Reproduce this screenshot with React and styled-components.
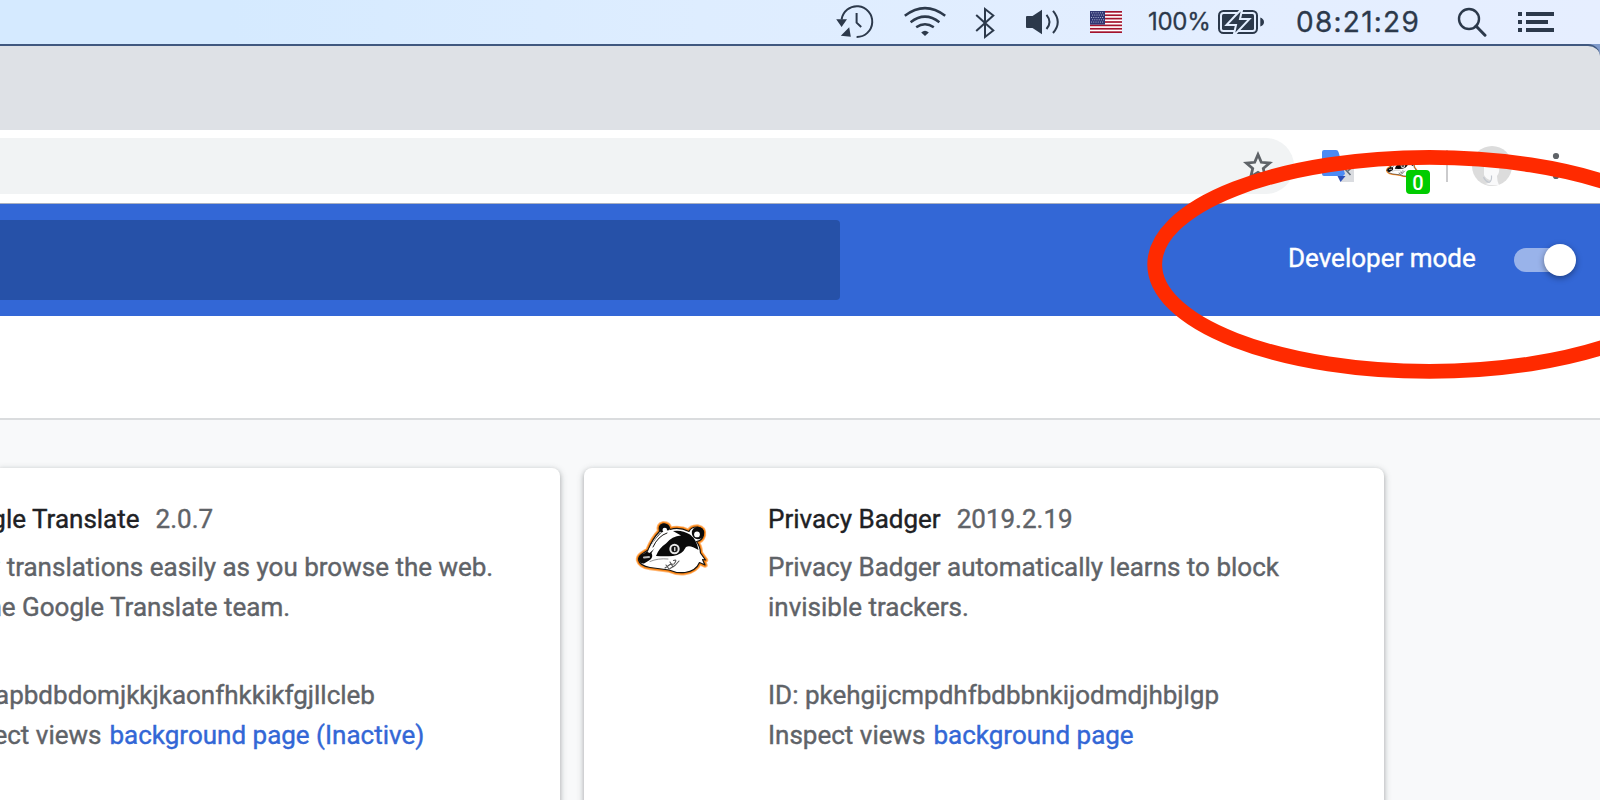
import React from "react";
import styled, { createGlobalStyle } from "styled-components";

const INK = "#2c394b";

const GlobalStyle = createGlobalStyle`
  html, body { margin: 0; padding: 0; overflow: hidden; }
  body { font-family: Roboto, sans-serif; background: #fff; }
`;

const Screen = styled.div`
  position: relative;
  width: 1600px;
  height: 800px;
  overflow: hidden;
  display: flex;
  flex-direction: column;
  background: #fff;
`;

const MenuBar = styled.div`
  flex: none;
  height: 44px;
  display: flex;
  align-items: flex-start;
  justify-content: flex-end;
  box-sizing: border-box;
  padding-right: 46px;
  color: ${INK};
  background: linear-gradient(90deg, #d5eaff 0, #d5eaff 230px, #deedff 700px, #e4eeff 1300px, #e6eeff 100%);
  font-family: Inter, sans-serif;
`;

const MenuIcon = styled.svg`
  flex: none;
  display: block;
  width: ${(p) => p.$w}px;
  height: 44px;
  margin-right: ${(p) => p.$gap || 0}px;
`;

const MenuText = styled.span`
  flex: none;
  width: ${(p) => p.$w}px;
  margin-right: ${(p) => p.$gap}px;
  font-size: ${(p) => p.$size}px;
  line-height: 44px;
  letter-spacing: ${(p) => p.$track}px;
  -webkit-text-stroke: 0.3px currentColor;
  white-space: nowrap;
`;

const WindowEdge = styled.div`
  flex: none;
  background: #7f9acb;
`;

const TabStrip = styled.div`
  height: 84px;
  border-top: 2px solid #40587f;
  border-top-right-radius: 12px;
  background: #dee1e6;
`;

const Toolbar = styled.div`
  flex: none;
  height: 73px;
  display: flex;
  align-items: flex-start;
  background: #fff;
  border-bottom: 1px solid #a9b0c0;
`;

const Omnibox = styled.div`
  width: 1294px;
  height: 56px;
  margin-top: 8px;
  border-radius: 0 28px 28px 0;
  background: #f1f3f4;
  display: flex;
  justify-content: flex-end;
  align-items: center;
`;

const ToolIcon = styled.svg`
  flex: none;
  display: block;
  width: ${(p) => p.$w}px;
  height: ${(p) => p.$h || 56}px;
  margin-left: ${(p) => p.$left || 0}px;
  margin-top: ${(p) => p.$top || 0}px;
`;

const ExtensionButton = styled.div`
  position: relative;
  display: flex;
  align-items: flex-start;
  width: 46px;
  height: 56px;
  margin: 8px 0 0 30px;
`;

const CountBadge = styled.span`
  position: absolute;
  right: 0;
  bottom: 0;
  width: 24px;
  height: 24px;
  border-radius: 4px;
  background: #00cc00;
  color: #fff;
  font: 500 20px/27px Roboto, sans-serif;
  text-align: center;
`;

const Divider = styled.div`
  width: 2px;
  height: 32px;
  margin: 20px 0 0 16px;
  background: #cbcbcd;
`;

const Header = styled.div`
  flex: none;
  height: 112px;
  display: flex;
  align-items: center;
  justify-content: space-between;
  box-sizing: border-box;
  padding-right: 24px;
  background: #3367d6;
`;

const SearchField = styled.div`
  width: 840px;
  height: 80px;
  border-radius: 0 4px 4px 0;
  background: #2651a8;
`;

const DevMode = styled.div`
  display: flex;
  align-items: center;
  color: #fff;
  font-size: 26px;
  line-height: 40px;
`;

const DevLabel = styled.span`
  width: 226px;
  white-space: nowrap;
  padding-bottom: 4px;
  -webkit-text-stroke: 0.4px currentColor;
`;

const Track = styled.span`
  width: 62px;
  height: 24px;
  box-sizing: border-box;
  display: flex;
  align-items: center;
  justify-content: flex-end;
  background: linear-gradient(#99b3ea, #99b3ea) 0 0 / 50px 24px no-repeat;
  border-radius: 12px;
`;

const Knob = styled.span`
  flex: none;
  width: 32px;
  height: 32px;
  border-radius: 50%;
  background: #fff;
  box-shadow: 0 2px 6px rgba(0, 0, 0, 0.4);
`;

const ActionArea = styled.div`
  flex: none;
  height: 102px;
  border-bottom: 2px solid #dadcde;
  background: #fff;
`;

const CardArea = styled.div`
  flex: 1;
  min-height: 0;
  display: flex;
  gap: 24px;
  padding-top: 48px;
  background: #f8f9fa;
`;

const Card = styled.div`
  flex: none;
  width: ${(p) => (p.$cut ? 560 : 800)}px;
  height: 420px;
  box-sizing: border-box;
  border-radius: ${(p) => (p.$cut ? "0 8px 8px 0" : "8px")};
  background: #fff;
  box-shadow: 0 2px 4px rgba(60, 64, 67, 0.3), 0 2px 6px 2px rgba(60, 64, 67, 0.15);
  display: flex;
  justify-content: ${(p) => (p.$cut ? "flex-end" : "flex-start")};
  padding: 31px ${(p) => (p.$cut ? 0 : 40)}px 0 ${(p) => (p.$cut ? 0 : 48)}px;
  overflow: hidden;
`;

const CardIcon = styled.svg`
  flex: none;
  width: 80px;
  height: 80px;
  margin: 9px 56px 0 0;
`;

const CardText = styled.div`
  width: ${(p) => (p.$cut ? 616 : 560)}px;
  flex: none;
  font-size: 26px;
  line-height: 40px;
  color: #5f6368;
  white-space: nowrap;
  -webkit-text-stroke: 0.4px currentColor;
`;

const Title = styled.div`
  color: #202124;
  height: 40px;
  margin-bottom: 8px;
`;

const Version = styled.span`
  color: #5f6368;
  margin-left: 16px;
`;

const Line = styled.div`
  height: 40px;
  margin-top: ${(p) => p.$top || 0}px;
`;

const Link = styled.a`
  color: #3367d6;
  margin-left: 8px;
`;

const Highlight = styled.svg`
  position: absolute;
  left: 1140px;
  top: 140px;
  width: 460px;
  height: 250px;
`;

const HEAD =
  "M2.5 38 Q2 35 6 32 L12 28 Q17 16 23.5 9.5 Q22 3 27 1.8 Q33 1.5 34 7.5 Q43 4.5 53 9.5 Q55 4.8 61.5 5 Q68.5 6.5 67.5 13 Q66 19 60.5 19.5 Q64 24 64.5 31 L69.5 38 L66.5 37.5 L69 43 L63.5 40.5 Q60 49 49 50.5 Q41 51.5 33 48 L14 45.5 Q4 44 2.5 38Z";

const BadgerArt = () => (
  <g strokeLinejoin="round" strokeLinecap="round">
    <path d={HEAD} fill="#fff" stroke="#ffb877" strokeWidth="5.4" />
    <path d={HEAD} fill="#fff" stroke="#f98413" strokeWidth="3.6" />
    <path d={HEAD} fill="#fff" stroke="#171411" strokeWidth="1.2" />
    <path d="M3 38 Q2 33 8 31.5 L14 27 Q18 17 24 11 Q27 12 29 11 Q23 16 20.5 23 L15.5 31 Q18 36 13 38.5 L8 41.5 Q4 42 3 38Z" fill="#0a0a0a" />
    <circle cx="28.3" cy="6.6" r="5.2" fill="#0a0a0a" />
    <circle cx="28.8" cy="8" r="2.3" fill="#fff" />
    <path d="M24 12 Q29 7.5 35 8.5 L24 22 L13.5 31 L11.5 30 Q17 19 24 12Z" fill="#fff" />
    <path d="M17 25 Q22 14 31 11" fill="none" stroke="#171411" strokeWidth="1" />
    <path d="M20 34 Q23 26 30 21.5 Q36 14 45 13.5 L37 9 Q46 7.5 54 12.5 Q61 18 62.5 28 Q54 22.5 50 25 Q46 33 37 34 Q29 34.5 20 34Z" fill="#0a0a0a" />
    <circle cx="62" cy="11" r="6.2" fill="#0a0a0a" />
    <circle cx="61" cy="12.4" r="2.9" fill="#fff" />
    <path d="M8 35.5 L13 35" stroke="#bbb" strokeWidth="2" />
    <circle cx="38.5" cy="27" r="5.2" fill="#e8e8e8" />
    <circle cx="38.5" cy="27" r="3.2" fill="#111" />
    <path d="M38.8 25.6 V28.6" stroke="#fff" strokeWidth="1.2" />
    <path d="M29 46 L34 42.5 L38 42 Q42 37 37.5 38.5 M34 46.5 L39 43.5 L43 39 M30 43 L33 47 M34 40 L37 45" fill="none" stroke="#555" strokeWidth="1.1" />
    <path d="M14 39.5 Q22 36 32 37" fill="none" stroke="#777" strokeWidth="0.8" />
  </g>
);

const FlagStars = () => {
  const stars = [];
  for (let r = 0; r < 5; r++)
    for (let c = 0; c < 6; c++)
      stars.push(<circle key={`${r}-${c}`} cx={1.6 + c * 2.2 + (r % 2 ? 1 : 0)} cy={12.8 + r * 2.3} r="0.5" />);
  return <g fill="#d5daf0">{stars}</g>;
};

export default function App() {
  return (
    <>
      <GlobalStyle />
      <Screen>
        <MenuBar>
          <MenuIcon $w={40} $gap={28} viewBox="0 0 40 44" fill="none" stroke={INK} strokeWidth="2">
            <path d="M5.6 19.5 A15.4 15.4 0 1 1 20.6 37" />
            <path d="M20.6 13 V22.6 L25.2 27" />
            <path d="M.2 19.3 H11 L5.6 27Z M13.2 27.3 L4.8 35.7 L14.8 36.7Z" fill={INK} stroke="none" />
          </MenuIcon>
          <MenuIcon $w={42} $gap={29} viewBox="0 0 42 44" fill="none" stroke={INK} strokeWidth="2.5">
            <path d="M.8 15.8 Q21 .5 41.2 15.8 M6.6 22.2 Q21 11 35.4 22.2 M12.2 27.3 Q21 21.2 29.8 27.3" />
            <path d="M17.2 32.4 Q21 29.3 24.8 32.4 L21 36Z" fill={INK} stroke="none" />
          </MenuIcon>
          <MenuIcon $w={20} $gap={30} viewBox="0 0 20 44" fill="none" stroke={INK} strokeWidth="2">
            <path d="M1.2 15 L18.3 30.5 L10 37 V9 L18.3 15.5 L1.2 31" />
          </MenuIcon>
          <MenuIcon $w={36} $gap={29} viewBox="0 0 36 44" fill="none" stroke={INK} strokeWidth="2">
            <path d="M1 17 Q1 16 2 16 H7.5 L17 9.8 V34.2 L7.5 28 H2 Q1 28 1 27Z" fill={INK} stroke="none" />
            <path d="M21.5 14.8 Q27.5 22 21.5 29 M28 10.8 Q37.5 22 28 33" />
          </MenuIcon>
          <MenuIcon $w={32} $gap={26} viewBox="0 0 32 44">
            <rect y="11" width="32" height="22" fill="#fff" />
            {[0, 1, 2, 3, 4, 5, 6].map((i) => (
              <rect key={i} y={11 + i * 3.385} width="32" height="1.69" fill="#a3132d" />
            ))}
            <rect y="11" width="15" height="13.6" fill="#2f3672" />
            <FlagStars />
          </MenuIcon>
          <MenuText $w={62} $gap={8} $size={24} $track={-0.3}>100%</MenuText>
          <MenuIcon $w={46} $gap={32} viewBox="0 0 46 44">
            <rect x="1" y="11" width="38" height="22" rx="4.5" fill="none" stroke={INK} strokeWidth="2" />
            <rect x="4" y="14" width="32" height="16" rx="1.5" fill={INK} />
            <path d="M42.3 17.5 Q46 19 46 22 Q46 25 42.3 26.5Z" fill={INK} />
            <path d="M24.5 8 L8.5 25 H18 L15.5 36 L31.5 19 H22Z" fill={INK} stroke="#e3eeff" strokeWidth="2" />
          </MenuIcon>
          <MenuText $w={126} $gap={35} $size={28} $track={1.25}>08:21:29</MenuText>
          <MenuIcon $w={30} $gap={31} viewBox="0 0 30 44" fill="none" stroke={INK} strokeWidth="2.4">
            <circle cx="12" cy="19" r="10" />
            <path d="M19 26 L28 35.2" strokeWidth="3" strokeLinecap="round" />
          </MenuIcon>
          <MenuIcon $w={36} viewBox="0 0 36 44" fill={INK}>
            <path d="M0 12h4v4H0z M0 20h4v4H0z M0 28h4v4H0z M8 12h28v4H8z M8 20h22v4H8z M8 28h28v4H8z" />
          </MenuIcon>
        </MenuBar>
        <WindowEdge><TabStrip /></WindowEdge>
        <Toolbar>
          <Omnibox>
            <ToolIcon $w={52} viewBox="0 0 52 56">
              <path d="M16 16.5 L19.3 24.3 L27.6 25 L21.3 30.5 L23.2 38.6 L16 34.3 L8.8 38.6 L10.7 30.5 L4.4 25 L12.7 24.3Z" fill="none" stroke="#5f6368" strokeWidth="2.8" />
            </ToolIcon>
          </Omnibox>
          <ToolIcon $w={32} $h={32} $left={28} $top={20} viewBox="0 0 32 32">
            <path d="M12 8 H30 Q32 8 32 10 V32 H19Z" fill="#dadce0" />
            <path d="M22 18 L28.5 25 M29 18 L26 21" stroke="#5f6b78" strokeWidth="1.6" />
            <path d="M2 0 H14 Q16 0 16.5 2 L23 24 L21 26 H2 Q0 26 0 24 V2 Q0 0 2 0Z" fill="#4c8bf5" />
            <path d="M15.5 26 H23.5 L18.5 32Z" fill="#2c50b8" />
          </ToolIcon>
          <ExtensionButton>
            <ToolIcon $w={32} $h={25} $left={2} $top={15} viewBox="0 -2 73 57"><BadgerArt /></ToolIcon>
            <CountBadge>0</CountBadge>
          </ExtensionButton>
          <Divider />
          <ToolIcon $w={40} $h={40} $left={24} $top={16} viewBox="0 0 40 40">
            <circle cx="20" cy="20" r="20" fill="#dcdcdc" />
            <path d="M12 19 H27 Q28 27 25 30 Q25 35 27 39 Q20 40 13 38 Q18 37 18 34 Q14 33 12 29Z" fill="#f9f9fa" />
            <path d="M11.5 31 Q13 35 17 36.5 Q20 35 19.5 29.5" fill="none" stroke="#c3c8d0" strokeWidth="1.2" />
          </ToolIcon>
          <ToolIcon $w={8} $h={40} $left={40} $top={16} viewBox="0 0 8 40" fill="#5f6368">
            <circle cx="4" cy="10" r="3.1" /><circle cx="4" cy="20" r="3.1" /><circle cx="4" cy="30" r="3.1" />
          </ToolIcon>
        </Toolbar>
        <Header>
          <SearchField />
          <DevMode><DevLabel>Developer mode</DevLabel><Track><Knob /></Track></DevMode>
        </Header>
        <ActionArea />
        <CardArea>
          <Card $cut>
            <CardText $cut>
              <Title>Google Translate<Version>2.0.7</Version></Title>
              <Line>View translations easily as you browse the web.</Line>
              <Line>By the Google Translate team.</Line>
              <Line $top={48}>ID: aapbdbdomjkkjkaonfhkkikfgjllcleb</Line>
              <Line>Inspect views<Link>background page (Inactive)</Link></Line>
            </CardText>
          </Card>
          <Card>
            <CardIcon viewBox="0 0 80 80"><g transform="translate(4 14)"><BadgerArt /></g></CardIcon>
            <CardText>
              <Title>Privacy Badger<Version>2019.2.19</Version></Title>
              <Line>Privacy Badger automatically learns to block</Line>
              <Line>invisible trackers.</Line>
              <Line $top={48}>ID: pkehgijcmpdhfbdbbnkijodmdjhbjlgp</Line>
              <Line>Inspect views<Link>background page</Link></Line>
            </CardText>
          </Card>
        </CardArea>
        <Highlight viewBox="1140 140 460 250">
          <ellipse cx="1429.5" cy="264.4" rx="274.8" ry="107" fill="none" stroke="#ff2a00" strokeWidth="14.8" />
        </Highlight>
      </Screen>
    </>
  );
}
